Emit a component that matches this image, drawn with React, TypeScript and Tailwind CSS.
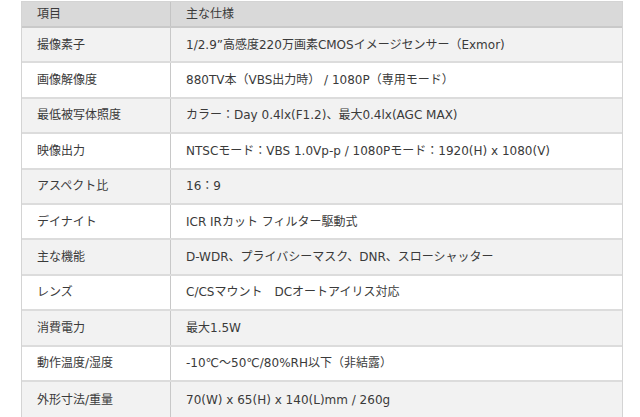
const rows: [string, string][] = [
  ["撮像素子", "1/2.9”高感度220万画素CMOSイメージセンサー（Exmor)"],
  ["画像解像度", "880TV本（VBS出力時） / 1080P（専用モード）"],
  ["最低被写体照度", "カラー：Day 0.4lx(F1.2)、最大0.4lx(AGC MAX)"],
  ["映像出力", "NTSCモード：VBS 1.0Vp-p / 1080Pモード：1920(H) x 1080(V)"],
  ["アスペクト比", "16：9"],
  ["デイナイト", "ICR IRカット フィルター駆動式"],
  ["主な機能", "D-WDR、プライバシーマスク、DNR、スローシャッター"],
  ["レンズ", "C/CSマウント　DCオートアイリス対応"],
  ["消費電力", "最大1.5W"],
  ["動作温度/湿度", "-10℃～50℃/80%RH以下（非結露）"],
  ["外形寸法/重量", "70(W) x 65(H) x 140(L)mm / 260g"],
];

export default function App() {
  return (
    <div className="w-[640px] h-[417px] bg-white pt-[1px] overflow-hidden">
      <div
        className="ml-[21px] w-[602px] border border-[#d4d4d4] text-[12px] text-[#3a3a3a]"
        style={{ fontFamily: '"DejaVu Sans", "Noto Sans CJK JP", sans-serif' }}
      >
        <div className="flex h-[26px] bg-[#d9d9d9] border-b-2 border-[#c9c9c9]">
          <div className="w-[149px] border-r border-[#c4c4c4] pl-[15px] flex items-center">項目</div>
          <div className="flex-1 pl-[15px] flex items-center">主な仕様</div>
        </div>
        {rows.map(([k, v], i) => (
          <div
            key={k}
            className={`flex h-[35.4px] ${i % 2 === 0 ? "bg-[#f2f2f2]" : "bg-white"} ${i < rows.length - 1 ? "border-b-2 border-[#dcdcdc]" : ""}`}
          >
            <div className="w-[149px] border-r border-[#c8c8c8] pl-[15px] flex items-center">{k}</div>
            <div className="flex-1 pl-[15px] flex items-center">{v}</div>
          </div>
        ))}
      </div>
    </div>
  );
}
